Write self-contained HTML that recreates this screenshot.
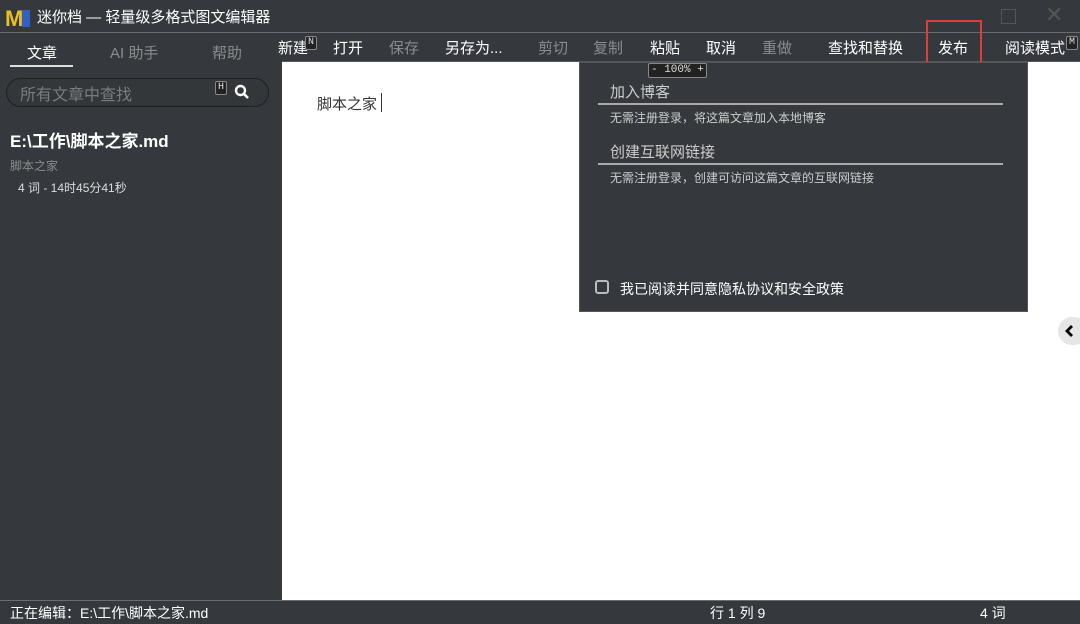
<!DOCTYPE html>
<html><head><meta charset="utf-8">
<style>
*{margin:0;padding:0;box-sizing:border-box}
body{width:1080px;height:624px;overflow:hidden;background:#35393d;font-family:"Liberation Sans","Noto Sans CJK SC",sans-serif;color:#fff;position:relative}
.abs{position:absolute;white-space:nowrap}
#title{left:0;top:0;width:1080px;height:33px;background:#35393d;border-bottom:1px solid #6a6d70}
#side{left:0;top:34px;width:282px;height:566px;background:#35393d}
#tb{left:282px;top:34px;width:798px;height:28px;background:#35393d;border-bottom:1px solid #55585b}
#ed{left:282px;top:62px;width:798px;height:538px;background:#fff}
#status{left:0;top:600px;width:1080px;height:24px;background:#35393d;border-top:1px solid #6a6d70}
.tbi{top:37px;font-size:15px;color:#fff}
.dis{color:#8a8c8e}
.key{border:1px solid #888;background:#222;color:#ddd;font-family:"Liberation Mono",monospace;font-size:10px;line-height:12px;padding:0 2px;border-radius:2px}
</style></head><body>
<div id="title" class="abs"></div>
<div class="abs" style="left:5px;top:5px;width:26px;height:24px;">
<svg width="26" height="24"><text x="0" y="21" font-family="Liberation Sans" font-weight="bold" font-size="22" fill="#e8c020">M</text><rect x="17" y="5" width="8" height="17" fill="#3060c0"/></svg></div>
<div class="abs" style="left:37px;top:6px;font-size:15px;color:#fff">迷你档 — 轻量级多格式图文编辑器</div>
<div class="abs" style="left:1001px;top:9px;width:15px;height:15px;border:1px solid #555"></div>
<div class="abs" style="left:1045px;top:2px;font-size:22px;color:#555">✕</div>

<div id="side" class="abs"></div>
<div class="abs" style="left:27px;top:42px;font-size:15px">文章</div>
<div class="abs" style="left:10px;top:65px;width:63px;height:2px;background:#ddd"></div>
<div class="abs" style="left:110px;top:42px;font-size:15px;color:#8a8c8e">AI 助手</div>
<div class="abs" style="left:212px;top:42px;font-size:15px;color:#8a8c8e">帮助</div>
<div class="abs" style="left:6px;top:78px;width:263px;height:29px;border:1px solid #1e2022;border-radius:15px;background:#33373a"></div>
<div class="abs" style="left:20px;top:81px;font-size:16px;color:#7a7c7e">所有文章中查找</div>
<div class="abs key" style="left:215px;top:81px">H</div>
<svg class="abs" style="left:234px;top:84px" width="16" height="16"><circle cx="6.5" cy="6.5" r="4.5" stroke="#fff" stroke-width="2.4" fill="none"/><line x1="10" y1="10" x2="14" y2="14" stroke="#fff" stroke-width="2.6"/></svg>
<div class="abs" style="left:10px;top:127px;font-size:17px;font-weight:bold">E:\工作\脚本之家.md</div>
<div class="abs" style="left:10px;top:157px;font-size:12px;color:#8a8c8e">脚本之家</div>
<div class="abs" style="left:18px;top:179px;font-size:12px;color:#ddd">4 词 - 14时45分41秒</div>

<div id="tb" class="abs"></div>
<div class="abs tbi" style="left:276px;width:32px;overflow:hidden;text-align:right">新建</div>
<div class="abs key" style="left:305px;top:36px">N</div>
<div class="abs tbi" style="left:333px">打开</div>
<div class="abs tbi dis" style="left:389px">保存</div>
<div class="abs tbi" style="left:445px">另存为...</div>
<div class="abs tbi dis" style="left:538px">剪切</div>
<div class="abs tbi dis" style="left:593px">复制</div>
<div class="abs tbi" style="left:650px">粘贴</div>
<div class="abs tbi" style="left:706px">取消</div>
<div class="abs tbi dis" style="left:762px">重做</div>
<div class="abs tbi" style="left:828px">查找和替换</div>
<div class="abs tbi" style="left:938px">发布</div>
<div class="abs" style="left:926px;top:20px;width:56px;height:44px;border:2px solid #e03c3c"></div>
<div class="abs tbi" style="left:1005px">阅读模式</div>
<div class="abs key" style="left:1066px;top:36px">M</div>

<div id="ed" class="abs"></div>
<div class="abs" style="left:317px;top:93px;font-size:15px;color:#333">脚本之家</div>
<div class="abs" style="left:381px;top:93px;width:1px;height:19px;background:#333"></div>

<div class="abs" style="left:579px;top:62px;width:449px;height:250px;background:#35393d;border:1px solid #555"></div>
<div class="abs key" style="left:648px;top:63px;font-size:11px;line-height:13px">- 100% +</div>
<div class="abs" style="left:610px;top:81px;font-size:15px;color:#ccc">加入博客</div>
<div class="abs" style="left:598px;top:103px;width:405px;height:2px;background:#aaa"></div>
<div class="abs" style="left:610px;top:109px;font-size:12px;color:#ccc">无需注册登录，将这篇文章加入本地博客</div>
<div class="abs" style="left:610px;top:141px;font-size:15px;color:#ccc">创建互联网链接</div>
<div class="abs" style="left:598px;top:163px;width:405px;height:2px;background:#aaa"></div>
<div class="abs" style="left:610px;top:169px;font-size:12px;color:#ccc">无需注册登录，创建可访问这篇文章的互联网链接</div>
<div class="abs" style="left:595px;top:280px;width:14px;height:14px;border:2px solid #bbb;border-radius:3px"></div>
<div class="abs" style="left:620px;top:279px;font-size:14px;color:#fff">我已阅读并同意隐私协议和安全政策</div>

<div class="abs" style="left:1058px;top:317px;width:30px;height:28px;border-radius:14px;background:#e6e6e6"></div>
<svg class="abs" style="left:1064px;top:324px" width="12" height="14"><path d="M8 2 L3 7 L8 12" stroke="#000" stroke-width="2.8" fill="none"/></svg>

<div id="status" class="abs"></div>
<div class="abs" style="left:10px;top:603px;font-size:14px;color:#fff">正在编辑：E:\工作\脚本之家.md</div>
<div class="abs" style="left:710px;top:603px;font-size:14px;color:#fff">行 1 列 9</div>
<div class="abs" style="left:980px;top:603px;font-size:14px;color:#fff">4 词</div>
</body></html>
